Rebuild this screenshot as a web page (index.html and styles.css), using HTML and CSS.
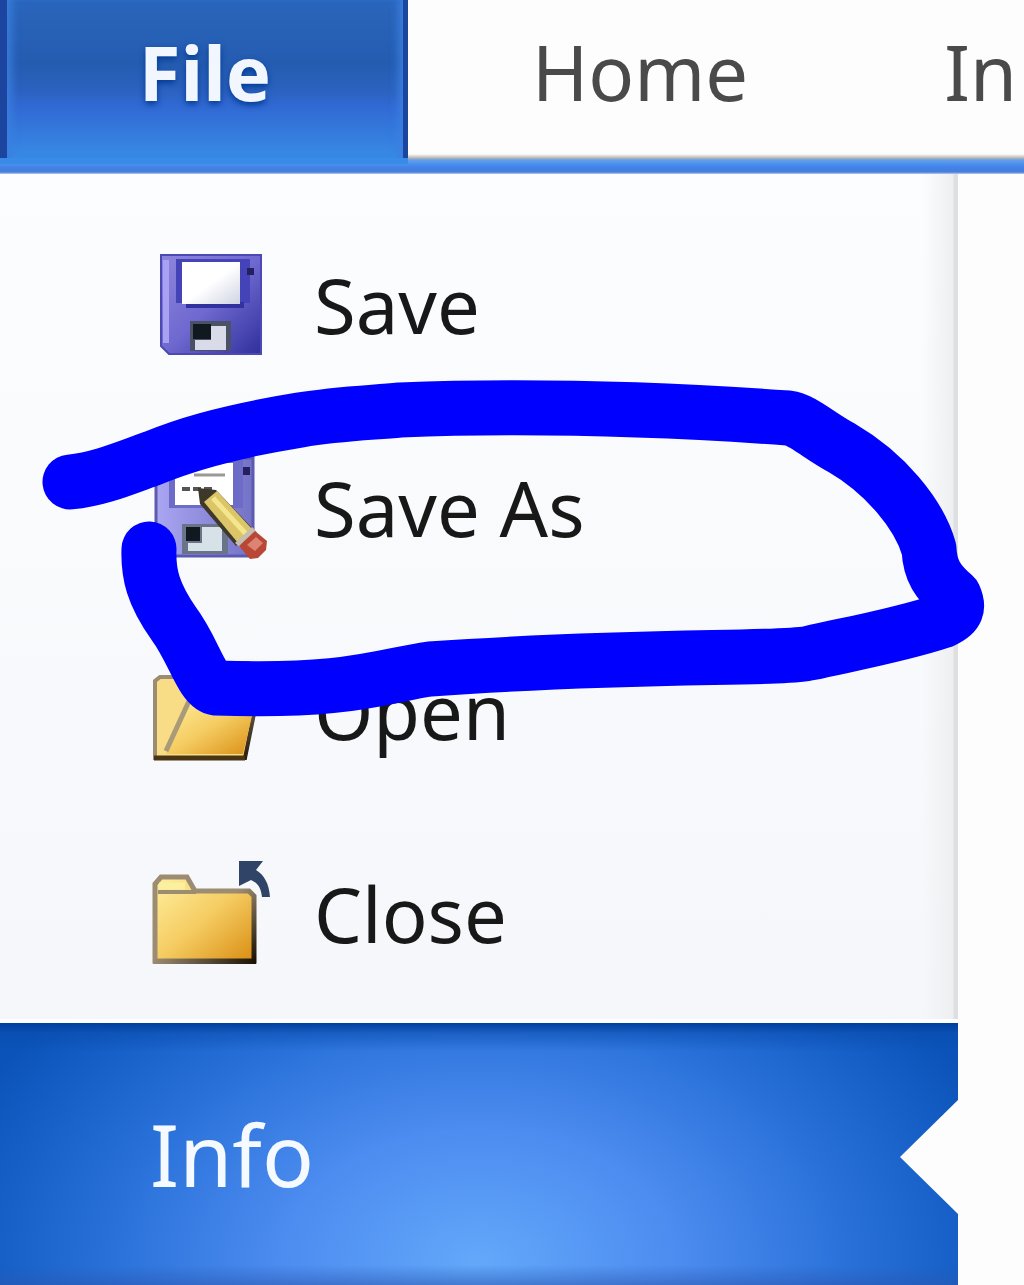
FILE: index.html
```html
<!DOCTYPE html>
<html lang="en">

<head>
    <meta charset="utf-8">
    <title>File menu</title>
    <link rel="stylesheet" href="styles.css">
</head>

<body>
    <nav class="tabs">
        <button class="tab tab-file" type="button">File</button>
        <button class="tab" type="button">Home</button>
        <button class="tab" type="button">In</button>
    </nav>

    <main class="backstage">
        <div class="menu">
            <div class="menu-list">
                <button class="menu-item" type="button">
                    <svg class="icon" viewBox="0 0 120 116" aria-hidden="true">
                        <defs>
                            <linearGradient id="disk" x1="0" y1="0" x2="1" y2="1">
                                <stop offset="0" stop-color="#8f87dc" />
                                <stop offset="0.5" stop-color="#6f69d0" />
                                <stop offset="1" stop-color="#30309c" />
                            </linearGradient>
                            <linearGradient id="label" x1="0" y1="0" x2="1" y2="1">
                                <stop offset="0.5" stop-color="#ffffff" />
                                <stop offset="1" stop-color="#cfd4e2" />
                            </linearGradient>
                        </defs>
                        <path d="M9 8h100v99H17l-8-8z" fill="url(#disk)" stroke="#4c48b4" stroke-width="2" />
                        <path d="M14 13v83" stroke="#a9a2f2" stroke-width="6" />
                        <path d="M24 12h74v44H24z" fill="#4444b8" />
                        <path d="M34 58h58" stroke="#3131a0" stroke-width="6" />
                        <path d="M30 15h58v42H30z" fill="url(#label)" />
                        <path d="M95 21h7v7h-7z" fill="#242060" />
                        <path d="M38 74h41v30H38z" fill="#4b5268" />
                        <path d="M41 77h18v15H41z" fill="#101820" />
                        <path d="M59 79h15v24H43V93h16z" fill="#d9dbe8" />
                    </svg>
                    <span>Save</span>
                </button>
                <button class="menu-item" type="button">
                    <svg class="icon" viewBox="0 0 120 116" aria-hidden="true">
                        <defs>
                            <linearGradient id="disk-light" x1="0" y1="0" x2="1" y2="0">
                                <stop offset="0" stop-color="#aaa6f2" />
                                <stop offset="1" stop-color="#7472c6" />
                            </linearGradient>
                        </defs>
                        <path d="M4 8h97v98H11l-7-7z" fill="url(#disk-light)" stroke="#5c5ab0" stroke-width="3" />
                        <path d="M17 10h74v48H17z" fill="#6c6cc8" />
                        <path d="M23 13h58v42H23z" fill="#fff" />
                        <path d="M91 17h7v8h-7z" fill="#242060" />
                        <path d="M42 25h31" stroke="#999" stroke-width="3" />
                        <path d="M30 39h32" stroke="#555" stroke-width="4" stroke-dasharray="8 3" />
                        <path d="M30 74h46v30H30z" fill="#69748a" />
                        <path d="M34 77h14v14H34z" fill="#101820" />
                        <path d="M50 77h20v24H36v-8h14z" fill="#d6e2e8" />
                        <path d="M46 38l18 2 37 39-17 17-36-42z" fill="#3d3829" />
                        <path d="M52 52l13-11 35 38-14 14z" fill="#dcc568" />
                        <path d="M61 48l33 36" stroke="#f4e68c" stroke-width="5" />
                        <path d="M83 93l17-16 5 5-16 16z" fill="#c5bdb0" />
                        <path d="M87 96l16-15 12 10-1 9-8 8-8 1z" fill="#b84736" />
                        <path d="M95 95l9-8 7 6-8 8z" fill="#dc8371" />
                    </svg>
                    <span>Save As</span>
                </button>
                <button class="menu-item" type="button">
                    <svg class="icon" viewBox="0 0 120 116" aria-hidden="true">
                        <defs>
                            <linearGradient id="folder" x1="0" y1="0" x2="1" y2="1">
                                <stop offset="0" stop-color="#fff0a0" />
                                <stop offset="0.5" stop-color="#f5cc62" />
                                <stop offset="1" stop-color="#d98d12" />
                            </linearGradient>
                            <linearGradient id="folder-edge" x1="0" y1="0" x2="1" y2="1">
                                <stop offset="0.5" stop-color="#9c8c72" />
                                <stop offset="1" stop-color="#1c1204" />
                            </linearGradient>
                        </defs>
                        <path d="M3 105V28l5-4h48l8-14h32v36h9L93 105z" fill="#f9dc86" stroke="url(#folder-edge)" stroke-width="4" />
                        <path d="M14 101l24-55h66L91 101z" fill="url(#folder)" />
                        <path d="M14 98l24-52" stroke="#a99a78" stroke-width="5" />
                        <path d="M2 105h91" stroke="#4a3512" stroke-width="5" />
                    </svg>
                    <span>Open</span>
                </button>
                <button class="menu-item" type="button">
                    <svg class="icon" viewBox="0 0 120 116" aria-hidden="true">
                        <defs>
                            <linearGradient id="folder-base" x1="0" y1="0" x2="1" y2="0">
                                <stop offset="0" stop-color="#9c8c72" />
                                <stop offset="1" stop-color="#1c1204" />
                            </linearGradient>
                        </defs>
                        <path d="M3 105V28l6-7h26l8 14h54l5 5v65z" fill="url(#folder)" stroke="url(#folder-edge)" stroke-width="5" />
                        <path d="M6 36h38" stroke="#9c8c72" stroke-width="4" />
                        <path d="M7 30h26" stroke="#fbf0a0" stroke-width="7" />
                        <path d="M1 103h103v5H1z" fill="url(#folder-base)" />
                        <path d="M87 5h24l-7 9c8 5 13 13 14 27h-8c-1-9-4-14-11-17l-12 6z" fill="#304468" />
                    </svg>
                    <span>Close</span>
                </button>
            </div>
            <button class="menu-info" type="button">Info</button>
        </div>

        <!-- marker drawn round "Save As" -->
        <svg class="marker" viewBox="0 0 1024 400" aria-hidden="true">
            <path d="M70 133C100 130 125 119 153 109C180 98 220 84 300 71C335 65 365 64 400 61C530 56 660 60 788 69C803 71 818 86 842 99C885 124 919 165 929 200C930 222 938 233 954 247C959 258 958 265 942 272C900 286 855 294 810 304C780 311 640 305 430 320C385 326 350 344 216 339C202 337 193 300 174 275C153 245 148 225 149 200" />
        </svg>
    </main>
</body>

</html>
```

FILE: styles.css
```css
* {
    box-sizing: border-box;
}

body {
    margin: 0;
    min-height: 100vh;
    display: flex;
    flex-direction: column;
    overflow-x: hidden;
    background: #fdfdfe;
    font-family: "Noto Sans", "Open Sans", sans-serif;
    font-size: 76px;
    line-height: 104px;
}

button {
    margin: 0;
    padding: 0;
    border: 0;
    background: none;
    font: inherit;
    text-align: left;
    cursor: pointer;
}

.tabs {
    display: flex;
    height: 174px;
    background: linear-gradient(#fdfdfd 154px, #b8b5ae 158px, #62a0ee 160px, #4084ea 167px, #4a7cd8 172px, #b8cff5 174px);
}

.tab {
    flex: none;
    height: 158px;
    padding: 0 0 14px;
    margin-left: 196px;
    color: #4a4a4a;
}

.tab-file {
    width: 408px;
    margin: 0;
    border: solid #1c45a0;
    border-width: 0 5px 0 7px;
    background: linear-gradient(#2a66bc, #245cb0 40%, #2c62c0 58%, #3068d2 66%, #388be6);
    box-shadow: inset 10px 0 10px -6px #3b7fe0, inset -10px 0 10px -6px #3b7fe0, 0 6px 0 #388be6;
    color: #f2f6ff;
    font-weight: bold;
    text-align: center;
    text-shadow: 0 3px 6px #003a94;
}

.tab-file + .tab {
    margin-left: 124px;
}

.backstage {
    position: relative;
    flex: 1;
    display: grid;
    grid-template-columns: 1fr 66px;
}

.menu {
    display: flex;
    flex-direction: column;
}

.menu-list {
    padding: 29px 0 4px;
    border-bottom: 4px solid #fff;
    background:
        linear-gradient(to left, #dedfe1 4px, #eeeff1 5px, transparent 36px),
        linear-gradient(#fcfdff, #f5f7fa);
}

.menu-item {
    display: flex;
    align-items: center;
    gap: 42px;
    width: 100%;
    height: 203px;
    padding-left: 152px;
    color: #181818;
}

.icon {
    flex: none;
    width: 120px;
    height: 116px;
}

.menu-info {
    flex: 1;
    min-height: 261px;
    padding-left: 150px;
    background:
        linear-gradient(#003f9c, #0a4cae88 10px, transparent 28px),
        linear-gradient(to top, #2a58b088, transparent 20px),
        radial-gradient(ellipse 560px 380px at 50% 240px, #62a8fa, #4d8cf0 35%, #2a72da 65%, #1660c8 85%, #0b53b8);
    /* arrow notch pointing at the open page */
    clip-path: polygon(0 0, 100% 0, 100% 77px, calc(100% - 58px) 134px, 100% 191px, 100% 100%, 0 100%);
    color: #f4faff;
    font-size: 86px;
}

.marker {
    position: absolute;
    top: 175px;
    left: 0;
    width: 1024px;
    height: 400px;
    pointer-events: none;
}

.marker path {
    fill: none;
    stroke: #0000ff;
    stroke-width: 55px;
    stroke-linecap: round;
    stroke-linejoin: round;
}
```
